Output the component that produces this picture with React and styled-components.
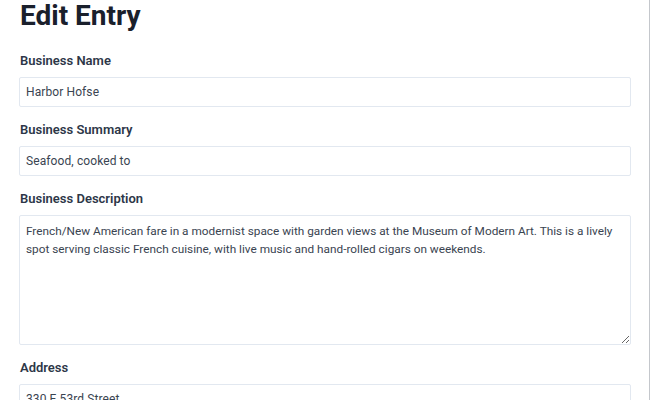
import React from 'react'
import styled, { createGlobalStyle } from 'styled-components'

const Global = createGlobalStyle`
  html, body {
    margin: 0;
    padding: 0;
    background: #fff;
  }
  body {
    font-family: Roboto, Inter, "Liberation Sans", sans-serif;
    overflow: hidden;
  }
`

const Page = styled.div`
  box-sizing: border-box;
  width: 650px;
  height: 400px;
  border-right: 1px solid #c4c7cc;
  padding: 0 18px 0 19px;
  overflow: hidden;
`

const Title = styled.h1`
  margin: 0 0 21px 1px;
  font-size: 28px;
  line-height: 32px;
  font-weight: 700;
  color: #1a202c;
`

const Field = styled.div`
  margin-bottom: 15px;
`

const Label = styled.label`
  display: block;
  margin: 0 0 8px 1px;
  font-size: 13px;
  line-height: 16px;
  font-weight: 600;
  color: #2d3748;
`

const Input = styled.input`
  box-sizing: border-box;
  display: block;
  width: 612px;
  height: 30px;
  margin: 0;
  padding: 0 6px;
  border: 1px solid #e2e8f0;
  border-radius: 2px;
  font-family: inherit;
  font-size: 12px;
  letter-spacing: 0.1px;
  color: #3a4451;
  background: #fff;
  outline: none;
`

const TextArea = styled.textarea`
  box-sizing: border-box;
  display: block;
  width: 612px;
  height: ${p => p.$rows * 18 + 22}px;
  margin: 0;
  padding: 6px;
  border: 1px solid #e2e8f0;
  border-radius: 2px;
  font-family: inherit;
  font-size: 11.8px;
  line-height: 18px;
  color: #3a4451;
  background: #fff;
  resize: vertical;
  outline: none;
`

const fields = [
  { label: 'Business Name', value: 'Harbor Hofse' },
  { label: 'Business Summary', value: 'Seafood, cooked to' },
  {
    label: 'Business Description',
    multi: true,
    value:
      'French/New American fare in a modernist space with garden views at the Museum of Modern Art. This is a lively spot serving classic French cuisine, with live music and hand-rolled cigars on weekends.',
  },
  { label: 'Address', value: '330 E 53rd Street' },
]

export default function App() {
  return (
    <Page>
      <Global />
      <Title>Edit Entry</Title>
      {fields.map((f) => (
        <Field key={f.label}>
          <Label>{f.label}</Label>
          {f.multi ? (
            <TextArea $rows={6} defaultValue={f.value} />
          ) : (
            <Input defaultValue={f.value} />
          )}
        </Field>
      ))}
    </Page>
  )
}
